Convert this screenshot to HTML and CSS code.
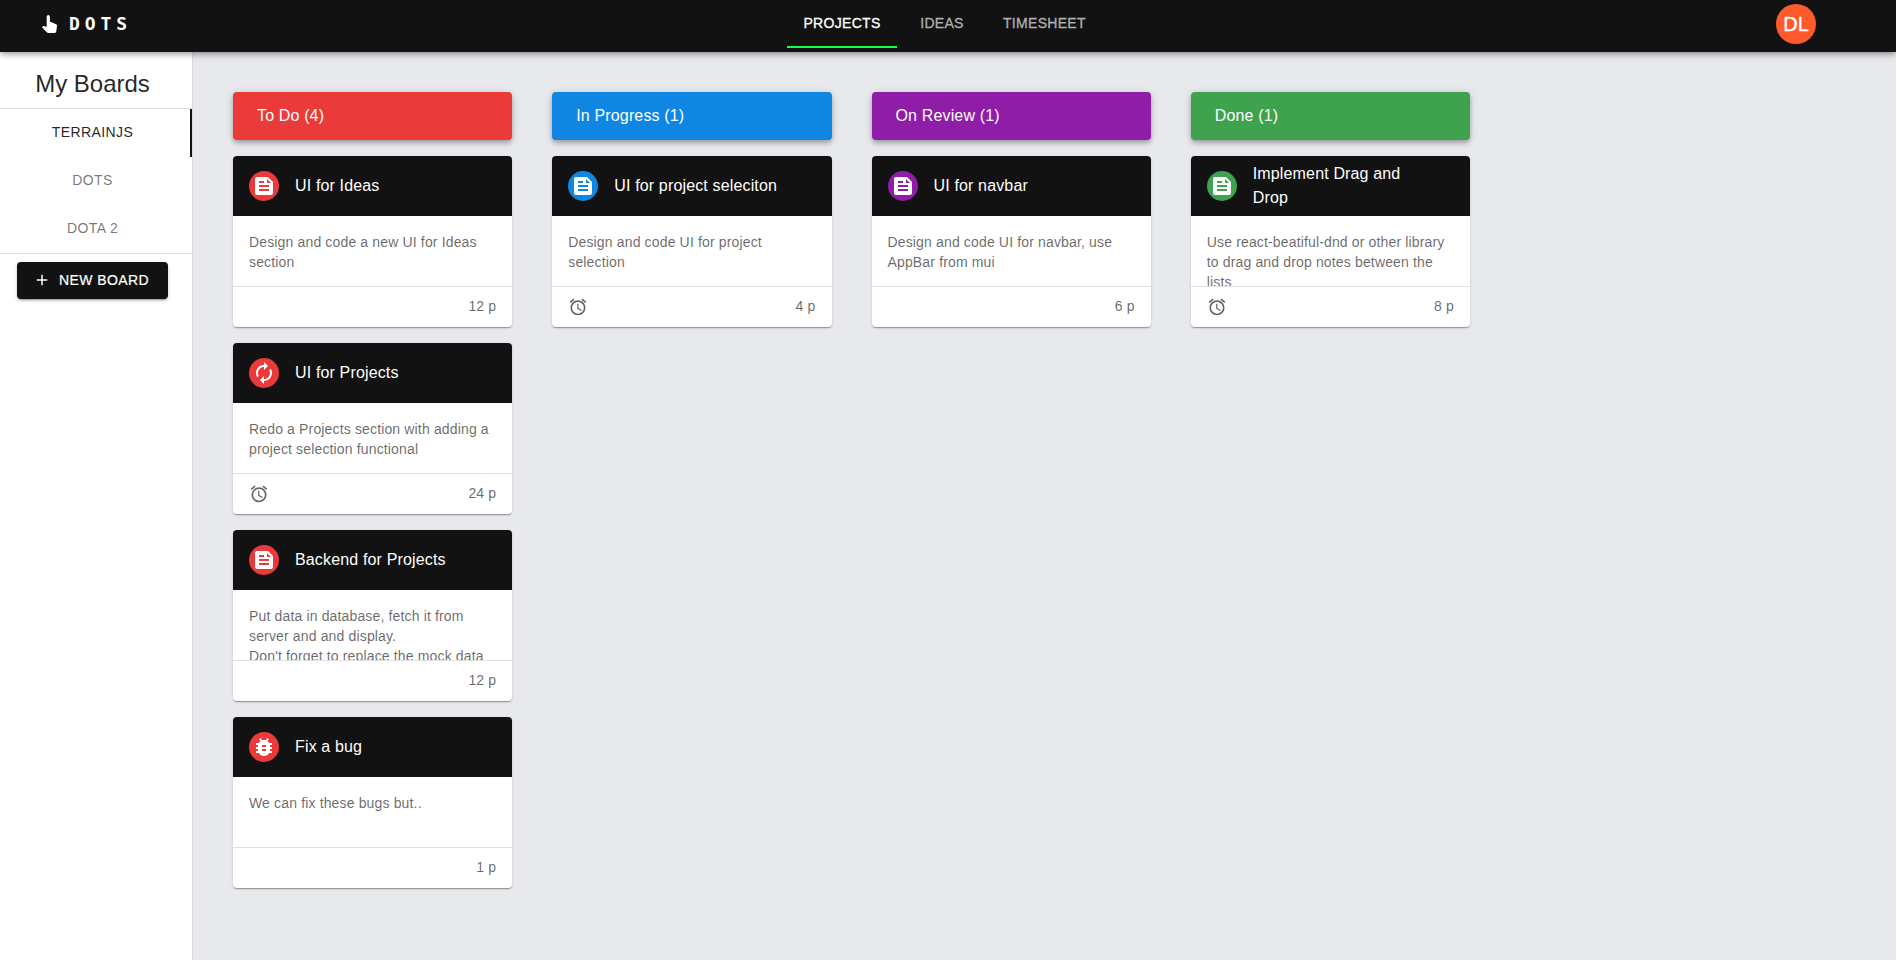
FILE: index.html
```html
<!DOCTYPE html>
<html lang="en">
<head>
<meta charset="utf-8">
<title>Dots</title>
<link rel="stylesheet" href="styles.css">
</head>
<body>
<svg class="sprite" aria-hidden="true">
  <symbol id="feed" viewBox="0 0 24 24"><path d="M16 3H5c-1.100 0-2 .9-2 2v14c0 1.100.9 2 2 2h14c1.100 0 2-.9 2-2V8l-5-5zM7 7h5v2H7V7zm10 10H7v-2h10v2zm0-4H7v-2h10v2zm-2-4V5l4 4h-4z"/></symbol>
  <symbol id="loop" viewBox="0 0 24 24"><path d="M12 6v3l4-4-4-4v3c-4.420 0-8 3.580-8 8 0 1.570.46 3.030 1.240 4.260L6.700 14.800c-.45-.83-.7-1.790-.7-2.800 0-3.310 2.690-6 6-6zm6.760 1.740L17.300 9.200c.44.84.7 1.790.7 2.800 0 3.310-2.690 6-6 6v-3l-4 4 4 4v-3c4.420 0 8-3.580 8-8 0-1.570-.46-3.030-1.240-4.260z"/></symbol>
  <symbol id="bug" viewBox="0 0 24 24"><path d="M20 8h-2.810c-.45-.78-1.070-1.450-1.820-1.960L17 4.410 15.590 3l-2.170 2.170C12.960 5.060 12.490 5 12 5c-.49 0-.96.06-1.410.17L8.410 3 7 4.410l1.620 1.630C7.880 6.550 7.260 7.220 6.810 8H4v2h2.090c-.05.33-.09.66-.09 1v1H4v2h2v1c0 .34.04.67.09 1H4v2h2.810c1.040 1.790 2.970 3 5.190 3s4.150-1.210 5.190-3H20v-2h-2.090c.05-.33.09-.66.09-1v-1h2v-2h-2v-1c0-.34-.04-.67-.09-1H20V8zm-6 8h-4v-2h4v2zm0-4h-4v-2h4v2z"/></symbol>
  <symbol id="alarm" viewBox="0 0 24 24"><path d="M22 5.720l-4.600-3.860-1.290 1.530 4.600 3.860L22 5.720zM7.880 3.390L6.600 1.860 2 5.710l1.290 1.530 4.590-3.850zM12.500 8H11v6l4.750 2.850.75-1.230-4-2.370V8zM12 4c-4.970 0-9 4.030-9 9s4.020 9 9 9c4.970 0 9-4.030 9-9s-4.030-9-9-9zm0 16c-3.870 0-7-3.130-7-7s3.130-7 7-7 7 3.130 7 7-3.130 7-7 7z"/></symbol>
</svg>

<header class="appbar">
  <div class="brand">
    <svg class="brand-icon" viewBox="0 0 15 18"><path d="M4.700 1.600a1.600 1.600 0 0 1 3.200 0V7h1.300l4.900 2.200c.7.400 1 .9.900 1.700l-.7 5.400c-.1 1-.8 1.700-1.700 1.700H6.300c-.6 0-1-.2-1.300-.5L0 12.300l.9-1c.3-.3.7-.4 1.100-.3l2.700.9z"/></svg>
    <span class="brand-name">DOTS</span>
  </div>
  <nav class="tabs">
    <a class="tab tab-active">PROJECTS</a>
    <a class="tab">IDEAS</a>
    <a class="tab">TIMESHEET</a>
  </nav>
  <div class="avatar">DL</div>
</header>

<div class="layout">
  <aside class="sidebar">
    <h1 class="sidebar-title">My Boards</h1>
    <nav class="boards">
      <a class="board board-active">TERRAINJS</a>
      <a class="board">DOTS</a>
      <a class="board">DOTA 2</a>
    </nav>
    <button class="new-board"><svg viewBox="0 0 24 24"><path d="M19 13h-6v6h-2v-6H5v-2h6V5h2v6h6v2z"/></svg>NEW BOARD</button>
  </aside>

  <main class="columns">
    <section class="column red">
      <h2 class="column-title">To Do (4)</h2>
      <article class="card">
        <header class="card-head"><span class="badge"><svg><use href="#feed"/></svg></span><h3 class="card-title">UI for Ideas</h3></header>
        <p class="card-body">Design and code a new UI for Ideas section</p>
        <footer class="card-foot"><span class="points">12 p</span></footer>
      </article>
      <article class="card">
        <header class="card-head"><span class="badge"><svg><use href="#loop"/></svg></span><h3 class="card-title">UI for Projects</h3></header>
        <p class="card-body">Redo a Projects section with adding a project selection functional</p>
        <footer class="card-foot"><svg class="alarm"><use href="#alarm"/></svg><span class="points">24 p</span></footer>
      </article>
      <article class="card">
        <header class="card-head"><span class="badge"><svg><use href="#feed"/></svg></span><h3 class="card-title">Backend for Projects</h3></header>
        <p class="card-body">Put data in database, fetch it from server and and display.<br>Don't forget to replace the mock data</p>
        <footer class="card-foot"><span class="points">12 p</span></footer>
      </article>
      <article class="card">
        <header class="card-head"><span class="badge"><svg><use href="#bug"/></svg></span><h3 class="card-title">Fix a bug</h3></header>
        <p class="card-body">We can fix these bugs but..</p>
        <footer class="card-foot"><span class="points">1 p</span></footer>
      </article>
    </section>

    <section class="column blue">
      <h2 class="column-title">In Progress (1)</h2>
      <article class="card">
        <header class="card-head"><span class="badge"><svg><use href="#feed"/></svg></span><h3 class="card-title">UI for project seleciton</h3></header>
        <p class="card-body">Design and code UI for project selection</p>
        <footer class="card-foot"><svg class="alarm"><use href="#alarm"/></svg><span class="points">4 p</span></footer>
      </article>
    </section>

    <section class="column purple">
      <h2 class="column-title">On Review (1)</h2>
      <article class="card">
        <header class="card-head"><span class="badge"><svg><use href="#feed"/></svg></span><h3 class="card-title">UI for navbar</h3></header>
        <p class="card-body">Design and code UI for navbar, use AppBar from mui</p>
        <footer class="card-foot"><span class="points">6 p</span></footer>
      </article>
    </section>

    <section class="column green">
      <h2 class="column-title">Done (1)</h2>
      <article class="card">
        <header class="card-head"><span class="badge"><svg><use href="#feed"/></svg></span><h3 class="card-title">Implement Drag and Drop</h3></header>
        <p class="card-body">Use react-beatiful-dnd or other library to drag and drop notes between the lists</p>
        <footer class="card-foot"><svg class="alarm"><use href="#alarm"/></svg><span class="points">8 p</span></footer>
      </article>
    </section>
  </main>
</div>
</body>
</html>
```
FILE: styles.css
```css
* { box-sizing: border-box; }

body {
  margin: 0;
  width: 1896px;
  height: 960px;
  display: flex;
  flex-direction: column;
  overflow: hidden;
  background: #fff;
  color: rgba(0, 0, 0, 0.87);
  font-family: "Liberation Sans", Arial, sans-serif;
}

html { background: #fff; }
h1, h2, h3, p { margin: 0; font-weight: 400; }
svg { fill: currentColor; flex: none; }
.sprite { display: none; }

/* top bar */
.appbar {
  position: relative;
  z-index: 1;
  flex: none;
  height: 52px;
  padding: 0 80px 4px 42px;
  display: grid;
  grid-template-columns: 745px 1fr auto;
  align-items: center;
  background: #121212;
  color: #fff;
  box-shadow: 0 2px 4px -1px rgba(0, 0, 0, 0.2), 0 4px 5px rgba(0, 0, 0, 0.14), 0 1px 10px rgba(0, 0, 0, 0.12);
}

.brand { display: flex; align-items: center; gap: 12px; }
.brand-icon { width: 15px; height: 18px; }
.brand-name {
  font: 700 18px/24px "DejaVu Sans Mono", monospace;
  letter-spacing: 4.9px;
}

.tabs { display: flex; height: 48px; }
.tab {
  min-width: 90px;
  padding: 0 16px 3px;
  display: flex;
  align-items: center;
  justify-content: center;
  font-size: 14px;
  font-weight: 500;
  letter-spacing: 0.3px;
  color: rgba(255, 255, 255, 0.6);
  -webkit-text-stroke: 0.3px;
}
.tab-active {
  min-width: 110px;
  color: #fff;
  box-shadow: inset 0 -2px #1aff40;
}

.avatar {
  width: 40px;
  height: 40px;
  display: grid;
  place-items: center;
  border-radius: 50%;
  background: #ff5a2b;
  font-size: 20px;
  -webkit-text-stroke: 0.3px;
}

.layout { flex: 1; display: flex; }

/* sidebar */
.sidebar {
  width: 193px;
  flex: none;
  border-right: 1px solid #dcdcde;
  background: #fff;
}
.sidebar-title {
  height: 57px;
  padding: 15px 7px 0 0;
  border-bottom: 1px solid #e0e0e0;
  font-size: 24px;
  line-height: 34px;
  text-align: center;
}
.boards { border-bottom: 1px solid #e0e0e0; }
.board {
  height: 48px;
  padding: 0 7px 2px 0;
  display: flex;
  align-items: center;
  justify-content: center;
  font-size: 14px;
  letter-spacing: 0.4px;
  color: rgba(0, 0, 0, 0.55);
}
.board-active {
  color: rgba(0, 0, 0, 0.87);
  box-shadow: inset -2px 0 #121212;
}
.new-board {
  height: 37px;
  width: 151px;
  margin: 8px 0 0 17px;
  padding: 0 0 2px 1px;
  display: flex;
  align-items: center;
  justify-content: center;
  gap: 8px;
  border: 0;
  border-radius: 4px;
  background: #121212;
  color: #fff;
  font: 500 14px/24px "Liberation Sans", Arial, sans-serif;
  letter-spacing: 0.4px;
  -webkit-text-stroke: 0.2px;
  box-shadow: 0 3px 1px -2px rgba(0, 0, 0, 0.2), 0 2px 2px rgba(0, 0, 0, 0.14), 0 1px 5px rgba(0, 0, 0, 0.12);
}
.new-board svg { width: 18px; height: 18px; margin-left: -4px; }

/* board columns */
.columns {
  flex: 1;
  padding: 40px;
  display: grid;
  grid-template-columns: repeat(4, 279.25px);
  column-gap: 40px;
  align-items: start;
  background: #e8e9ed;
}
.column { display: grid; gap: 16px; }
.red { --accent: #ea3a3a; }
.blue { --accent: #0f87e2; }
.purple { --accent: #8f1da8; }
.green { --accent: #3ea24f; }

.column-title {
  height: 48px;
  padding: 0 24px 1px;
  border-radius: 4px;
  background: var(--accent);
  color: #fff;
  font-size: 16px;
  line-height: 47px;
  letter-spacing: 0.15px;
  box-shadow: 0 2px 4px -1px rgba(0, 0, 0, 0.2), 0 4px 5px rgba(0, 0, 0, 0.14), 0 1px 10px rgba(0, 0, 0, 0.12);
}

.card {
  border-radius: 4px;
  overflow: hidden;
  background: #fff;
  box-shadow: 0 2px 1px -1px rgba(0, 0, 0, 0.2), 0 1px 1px rgba(0, 0, 0, 0.14), 0 1px 3px rgba(0, 0, 0, 0.12);
}
.card-head {
  height: 60px;
  padding: 0 46px 0 16px;
  display: flex;
  align-items: center;
  gap: 16px;
  background: #121212;
  color: #fff;
}
.badge {
  width: 30px;
  height: 30px;
  flex: none;
  display: grid;
  place-items: center;
  border-radius: 50%;
  background: var(--accent);
}
.badge svg { width: 24px; height: 24px; }
.card-title { font-size: 16px; line-height: 24px; letter-spacing: 0.15px; }
.card-body {
  height: 70px;
  padding: 16px 16px 0;
  overflow: hidden;
  font-size: 14px;
  line-height: 20px;
  letter-spacing: 0.15px;
  color: rgba(0, 0, 0, 0.6);
}
.card-foot {
  height: 41px;
  padding: 0 16px;
  display: flex;
  align-items: center;
  border-top: 1px solid #e0e0e0;
  font-size: 14px;
  letter-spacing: 0.15px;
  color: rgba(0, 0, 0, 0.6);
}
.alarm { width: 20px; height: 20px; }
.points { margin-left: auto; padding-bottom: 2px; }
```
